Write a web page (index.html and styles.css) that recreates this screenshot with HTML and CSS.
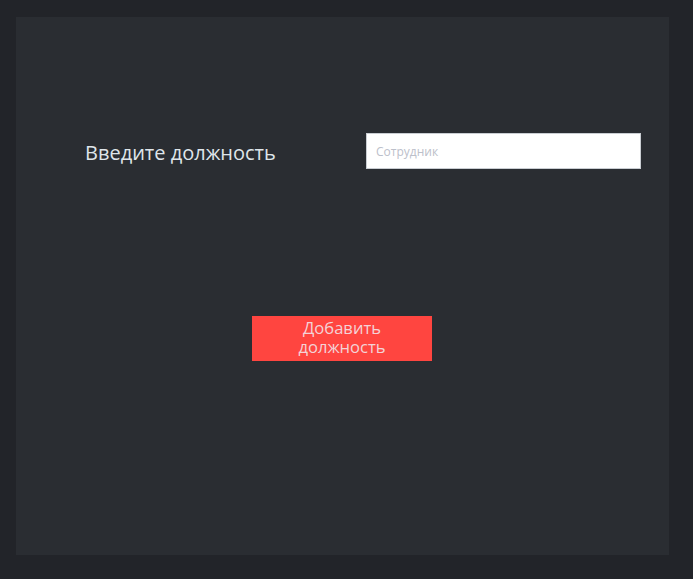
FILE: index.html
```html
<!DOCTYPE html>
<html lang="ru">
<head>
<meta charset="utf-8">
<link rel="stylesheet" href="styles.css">
</head>
<body>
<main class="panel">
  <div class="row">
    <label class="label" for="pos">Введите должность</label>
    <input class="field" id="pos" type="text" placeholder="Сотрудник">
  </div>
  <button class="btn">Добавить должность</button>
</main>
</body>
</html>
```

FILE: styles.css
```css
html, body {
  margin: 0;
  padding: 0;
  background: #222429;
}
body {
  padding: 17px 24px 24px 16px;
  font-family: "Open Sans", "Noto Sans", sans-serif;
}
.panel {
  width: 653px;
  height: 538px;
  box-sizing: border-box;
  background: #2a2d32;
  padding-top: 116px;
  display: flex;
  flex-direction: column;
}
.row {
  display: flex;
  align-items: center;
  height: 36px;
}
.label {
  margin-left: 69px;
  width: 281px;
  font-size: 20px;
  color: #dfe5ea;
  line-height: 36px;
  padding-top: 3px;
}
.field {
  width: 275px;
  height: 36px;
  box-sizing: border-box;
  border: 1px solid #c9cdd2;
  background: #fff;
  padding: 0 9px;
  font-family: "Open Sans", sans-serif;
  font-size: 12px;
  outline: none;
}
.field::placeholder {
  color: #bcc0ca;
}
.btn {
  margin-top: 147px;
  margin-left: 236px;
  width: 180px;
  height: 45px;
  border: none;
  background: #ff4540;
  color: #f4d2d6;
  font-family: "Open Sans", sans-serif;
  font-size: 16.6px;
  line-height: 19px;
  padding: 0 30px 3px;
}
```
